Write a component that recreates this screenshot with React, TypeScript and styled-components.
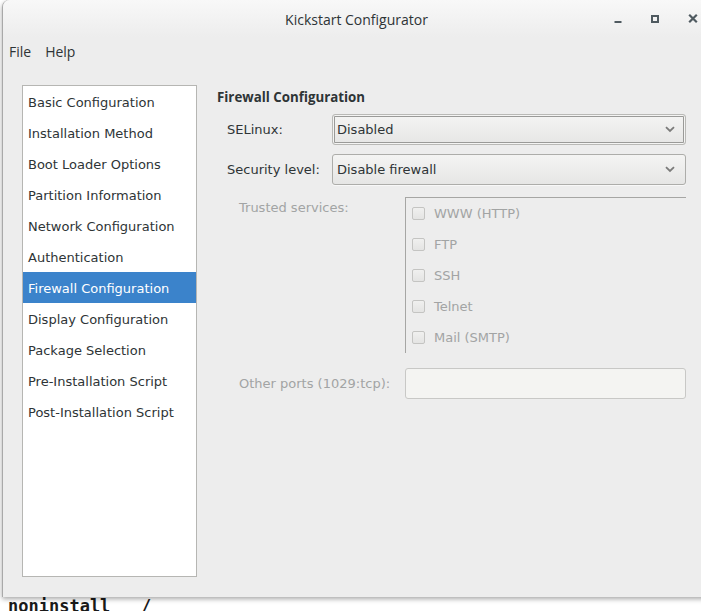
import React from "react";
import styled, { createGlobalStyle } from "styled-components";

const GlobalStyle = createGlobalStyle`
  html, body {
    margin: 0;
    padding: 0;
    background: #ffffff;
    overflow: hidden;
  }
`;

const Desktop = styled.div`
  position: relative;
  width: 701px;
  height: 611px;
  overflow: hidden;
  background: #ffffff;
  font-family: "DejaVu Sans", sans-serif;
`;

const BehindText = styled.div`
  position: absolute;
  left: 8px;
  top: 596px;
  font-family: "DejaVu Sans Mono", monospace;
  font-weight: bold;
  font-size: 17px;
  color: #1a1a1a;
  white-space: pre;
`;

const Window = styled.div`
  position: absolute;
  left: 2px;
  top: 0;
  width: 707px;
  height: 597px;
  background: #ededed;
  border-left: 1px solid #a9a9a9;
  border-radius: 7px 7px 0 0;
  box-shadow: 0 2px 5px rgba(0, 0, 0, 0.35);
  display: flex;
  flex-direction: column;
`;

const TitleBar = styled.div`
  height: 37px;
  display: flex;
  align-items: center;
  justify-content: center;
  position: relative;
  background: linear-gradient(#f8f8f8, #ededed);
  border-radius: 7px 7px 0 0;
`;

const Title = styled.div`
  font-family: "Open Sans", sans-serif;
  font-size: 14px;
  color: #2e3436;
  margin-top: 1px;
`;

const Controls = styled.div`
  position: absolute;
  right: 12px;
  top: 0;
  height: 37px;
  display: flex;
  align-items: center;
  gap: 29px;
  svg {
    display: block;
  }
`;

const MenuBar = styled.div`
  height: 31px;
  display: flex;
  align-items: center;
`;

const MenuItem = styled.div`
  font-family: "Open Sans", sans-serif;
  font-size: 14px;
  color: #2e3436;
  padding: 0 8px 2px 6px;
`;

const Body = styled.div`
  flex: 1;
  display: flex;
  padding: 17px 24px 20px 19px;
  gap: 20px;
`;

const SideList = styled.div`
  width: 173px;
  background: #ffffff;
  border: 1px solid #b6b6b3;
  display: flex;
  flex-direction: column;
`;

const SideItem = styled.div<{ $active?: boolean }>`
  height: 31px;
  display: flex;
  align-items: center;
  padding: 1px 0 0 5px;
  box-sizing: border-box;
  font-size: 13px;
  color: ${(p) => (p.$active ? "#ffffff" : "#2e3436")};
  background: ${(p) => (p.$active ? "#3b83cb" : "transparent")};
  white-space: nowrap;
`;

const Panel = styled.div`
  flex: 1;
  display: flex;
  flex-direction: column;
  padding-top: 2px;
`;

const Heading = styled.div`
  font-family: "Open Sans", sans-serif;
  font-weight: bold;
  font-size: 13.3px;
  color: #2e3436;
  height: 20px;
  line-height: 20px;
`;

const FormGrid = styled.div`
  display: grid;
  grid-template-columns: 105px 1fr;
  row-gap: 9px;
  margin-top: 7px;
  padding-left: 10px;
`;

const Label = styled.div`
  font-size: 13px;
  color: #2e3436;
  display: flex;
  align-items: center;
`;

const Combo = styled.div<{ $focused?: boolean }>`
  height: 29px;
  border: 1px solid ${(p) => (p.$focused ? "#b9b9b6" : "#adadaa")};
  border-radius: 3px;
  background: linear-gradient(#f4f4f3, #e6e6e5);
  display: flex;
  align-items: center;
  justify-content: space-between;
  padding: 0 10px 0 4px;
  font-size: 13px;
  color: #2e3436;
  box-shadow: ${(p) =>
    p.$focused ? "inset 0 0 0 1px #f4f4f3, inset 0 0 0 2px #9a9a98" : "0 1px 0 rgba(255,255,255,0.6)"};
`;

const Chevron = () => (
  <svg width="10" height="7" viewBox="0 0 10 7">
    <path d="M1 1.2 L5 5 L9 1.2" fill="none" stroke="#7b7b7a" strokeWidth="1.8" />
  </svg>
);

const ServicesGrid = styled.div`
  display: grid;
  grid-template-columns: 166px 1fr;
  margin-top: 12px;
  padding-left: 22px;
  row-gap: 15px;
`;

const DimLabel = styled.div<{ $center?: boolean }>`
  font-size: 13px;
  color: #a2a4a4;
  display: flex;
  align-items: ${(p) => (p.$center ? "center" : "flex-start")};
  padding-top: ${(p) => (p.$center ? "0" : "3px")};
`;

const ServiceFrame = styled.div`
  border-top: 1px solid #a6a6a4;
  border-left: 1px solid #a6a6a4;
  height: 155px;
  display: flex;
  flex-direction: column;
`;

const ServiceRow = styled.div`
  height: 31px;
  display: flex;
  align-items: center;
  padding-left: 6px;
  gap: 9px;
  font-size: 13px;
  color: #a2a4a4;
`;

const CheckBox = styled.div`
  width: 11px;
  height: 11px;
  border: 1px solid #c4c4c2;
  border-radius: 2px;
  background: linear-gradient(#f0f0ef, #e4e4e3);
`;

const Entry = styled.div`
  height: 29px;
  border: 1px solid #c8c8c6;
  border-radius: 3px;
  background: #f4f4f2;
`;

const sections = [
  "Basic Configuration",
  "Installation Method",
  "Boot Loader Options",
  "Partition Information",
  "Network Configuration",
  "Authentication",
  "Firewall Configuration",
  "Display Configuration",
  "Package Selection",
  "Pre-Installation Script",
  "Post-Installation Script",
];

const services = ["WWW (HTTP)", "FTP", "SSH", "Telnet", "Mail (SMTP)"];

export default function App() {
  return (
    <Desktop>
      <GlobalStyle />
      <BehindText>{"noninstall   /"}</BehindText>
      <Window>
        <TitleBar>
          <Title>Kickstart Configurator</Title>
          <Controls>
            <svg width="8" height="10" viewBox="0 0 8 10">
              <rect x="0.5" y="7" width="7" height="2" fill="#4f5a60" />
            </svg>
            <svg width="8" height="8" viewBox="0 0 8 8">
              <rect x="1" y="1" width="6" height="6" fill="none" stroke="#4f5a60" strokeWidth="2" />
            </svg>
            <svg width="10" height="9" viewBox="0 0 10 9">
              <path d="M1.2 0.8 L8.8 8.2 M8.8 0.8 L1.2 8.2" stroke="#4f5a60" strokeWidth="2.2" />
            </svg>
          </Controls>
        </TitleBar>
        <MenuBar>
          <MenuItem>File</MenuItem>
          <MenuItem>Help</MenuItem>
        </MenuBar>
        <Body>
          <SideList>
            {sections.map((s) => (
              <SideItem key={s} $active={s === "Firewall Configuration"}>
                {s}
              </SideItem>
            ))}
          </SideList>
          <Panel>
            <Heading>Firewall Configuration</Heading>
            <FormGrid>
              <Label>SELinux:</Label>
              <Combo $focused>
                <span>Disabled</span>
                <Chevron />
              </Combo>
              <Label>Security level:</Label>
              <Combo>
                <span>Disable firewall</span>
                <Chevron />
              </Combo>
            </FormGrid>
            <ServicesGrid>
              <DimLabel>Trusted services:</DimLabel>
              <ServiceFrame>
                {services.map((s) => (
                  <ServiceRow key={s}>
                    <CheckBox />
                    {s}
                  </ServiceRow>
                ))}
              </ServiceFrame>
              <DimLabel $center>Other ports (1029:tcp):</DimLabel>
              <Entry />
            </ServicesGrid>
          </Panel>
        </Body>
      </Window>
    </Desktop>
  );
}
